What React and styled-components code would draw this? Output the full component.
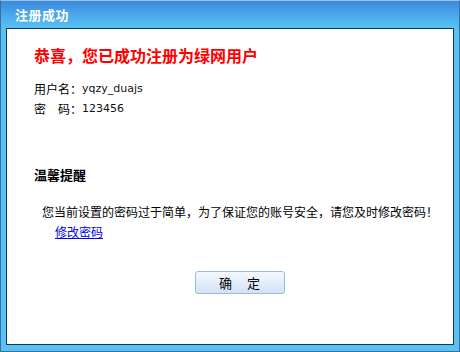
import React from "react";
import styled, { createGlobalStyle } from "styled-components";

const GlobalStyle = createGlobalStyle`
  body {
    margin: 0;
    background: #ffffff;
    font-family: "Noto Sans CJK SC", "Liberation Sans", sans-serif;
  }
`;

const Frame = styled.div`
  width: 460px;
  height: 352px;
  box-sizing: border-box;
  border: 1px solid #3f6f98;
  border-top-color: #9fc3e6;
  background: linear-gradient(180deg, #3a89df 0px, #4aa8ea 14px, #57c2f3 27px, #57c2f3 100%);
  display: flex;
  flex-direction: column;
`;

const TitleBar = styled.div`
  height: 27px;
  flex-shrink: 0;
  display: flex;
  align-items: center;
  padding-left: 14px;
  color: #ffffff;
  font-size: 13px;
  font-weight: bold;
  letter-spacing: 0.5px;
`;

const Panel = styled.div`
  margin: 0 5px;
  height: 317px;
  box-sizing: border-box;
  border: 1px solid #0f3a5c;
  background: #ffffff;
  padding: 16px 0 0 27px;
  display: flex;
  flex-direction: column;
`;

const Headline = styled.h1`
  margin: 0;
  color: #ff0000;
  font-size: 16px;
  line-height: 20px;
  font-weight: bold;
`;

const InfoList = styled.div`
  margin-top: 14px;
  display: flex;
  flex-direction: column;
`;

const InfoRow = styled.div`
  font-size: 12px;
  line-height: 20px;
  color: #000;
  display: flex;
  align-items: center;
`;

const Label = styled.span`
  width: 48px;
`;

const Value = styled.span`
  font-family: "DejaVu Sans", "Liberation Sans", sans-serif;
  font-size: 11px;
  color: #111;
`;

const NoticeTitle = styled.h2`
  margin: 46px 0 0 0;
  font-size: 13px;
  line-height: 20px;
  font-weight: bold;
  color: #000;
`;

const NoticeText = styled.p`
  margin: 17px 0 0 8px;
  font-size: 12px;
  line-height: 20px;
  color: #000;
`;

const ChangeLink = styled.a`
  margin-left: 21px;
  align-self: flex-start;
  font-size: 12px;
  line-height: 20px;
  color: #0000ee;
  text-decoration: underline;
  cursor: pointer;
`;

const Button = styled.button`
  margin: 29px 0 0 161px;
  width: 90px;
  height: 23px;
  box-sizing: border-box;
  border: 1px solid #9cbce2;
  border-radius: 3px;
  background: linear-gradient(180deg, #f3f8fe 0%, #e3edfa 50%, #d3e2f6 100%);
  font-family: "Noto Sans CJK SC", sans-serif;
  font-size: 13px;
  color: #000;
  letter-spacing: 1px;
  cursor: pointer;
  padding: 0;
`;

export default function App() {
  return (
    <>
      <GlobalStyle />
      <Frame>
        <TitleBar>注册成功</TitleBar>
        <Panel>
          <Headline>恭喜，您已成功注册为绿网用户</Headline>
          <InfoList>
            <InfoRow>
              <Label>用户名：</Label>
              <Value>yqzy_duajs</Value>
            </InfoRow>
            <InfoRow>
              <Label>密　码：</Label>
              <Value>123456</Value>
            </InfoRow>
          </InfoList>
          <NoticeTitle>温馨提醒</NoticeTitle>
          <NoticeText>
            您当前设置的密码过于简单，为了保证您的账号安全，请您及时修改密码！
          </NoticeText>
          <ChangeLink>修改密码</ChangeLink>
          <Button>确　定</Button>
        </Panel>
      </Frame>
    </>
  );
}
